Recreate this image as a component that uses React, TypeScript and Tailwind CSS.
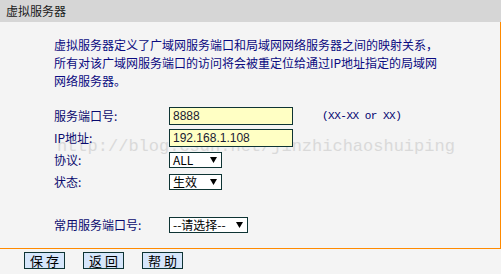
import React from "react";

const cjk = { fontFamily: '"Noto Sans CJK SC", "Liberation Sans", sans-serif' };

function Arrow() {
  return (
    <svg width="7" height="6" viewBox="0 0 7 6" className="shrink-0">
      <path d="M0 0 H7 L3.5 6 Z" fill="#000" />
    </svg>
  );
}

function Sel({ w, text }: { w: string; text: string }) {
  return (
    <div
      className={`${w} h-[16px] border border-[#0e3434] bg-white flex items-center justify-between pl-[3px] pr-[4px] text-[12px] leading-none text-black`}
      style={cjk}
    >
      <span>{text}</span>
      <Arrow />
    </div>
  );
}

function Input({ value }: { value: string }) {
  return (
    <div
      className="w-[124px] h-[18px] border border-[#0e3434] bg-[#ffffc4] flex items-center pl-[3px] text-[12px] leading-none text-[#1a1a33]"
      style={{ fontFamily: '"Liberation Sans", Arial, sans-serif' }}
    >
      {value}
    </div>
  );
}

function Row({ label, children }: { label: string; children: React.ReactNode }) {
  return (
    <div className="h-[22px] flex items-center">
      <div className="w-[115px] text-[12px] text-[#0a0a6e] leading-none" style={cjk}>
        {label}
      </div>
      {children}
    </div>
  );
}

function Btn({ text }: { text: string }) {
  return (
    <div
      className="w-[41px] h-[17px] border border-[#0e3434] bg-[#d6e6fb] flex items-center justify-center text-[13px] leading-none text-black tracking-[3px] pl-[3px]"
      style={cjk}
    >
      {text}
    </div>
  );
}

export default function App() {
  return (
    <div className="w-[501px] h-[274px] bg-[#f4f4f4] relative overflow-hidden" style={cjk}>
      <div
        className="absolute left-[57px] top-[137px] text-[17px] leading-[20px] text-[#cfcfcf] opacity-70 whitespace-nowrap pointer-events-none"
        style={{ fontFamily: '"Liberation Mono", monospace' }}
      >
        http://blog.csdn.net/jinzhichaoshuiping
      </div>
      <div className="relative h-[22px] bg-[#d6d6d6] flex items-center pl-[6px] text-[12px] text-[#1a1a1a]">
        虚拟服务器
      </div>
      <div className="relative h-[227px] border-r border-b border-[#ff8a00] pl-[54px] pt-[14px]">
        <div className="text-[12px] leading-[18px] text-[#0a0a80] whitespace-nowrap">
          虚拟服务器定义了广域网服务端口和局域网网络服务器之间的映射关系，
          <br />
          所有对该广域网服务端口的访问将会被重定位给通过IP地址指定的局域网
          <br />
          网络服务器。
        </div>
        <div className="mt-[15px]">
          <Row label="服务端口号:">
            <Input value="8888" />
            <span
              className="ml-[29px] text-[11px] tracking-[-0.5px] text-[#00006e] leading-none"
              style={{ fontFamily: '"Liberation Mono", monospace' }}
            >
              (XX-XX or XX)
            </span>
          </Row>
          <Row label="IP地址:">
            <Input value="192.168.1.108" />
          </Row>
          <Row label="协议:">
            <Sel w="w-[53px]" text="ALL" />
          </Row>
          <Row label="状态:">
            <Sel w="w-[53px]" text="生效" />
          </Row>
          <div className="mt-[21px]">
            <Row label="常用服务端口号:">
              <Sel w="w-[79px]" text="--请选择--" />
            </Row>
          </div>
        </div>
      </div>
      <div className="relative flex items-center gap-[18px] pl-[24px] pt-[3px]">
        <Btn text="保存" />
        <Btn text="返回" />
        <Btn text="帮助" />
      </div>
    </div>
  );
}
